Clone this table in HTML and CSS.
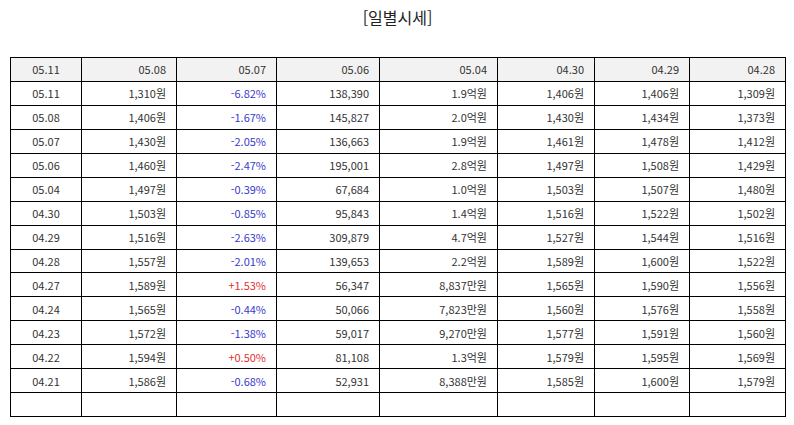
FILE: index.html
```html
<!DOCTYPE html>
<html lang="ko">
<head>
<meta charset="utf-8">
<link rel="stylesheet" href="styles.css">
</head>
<body>
<div class="page">
<h1 class="title">[일별시세]</h1>
<table class="grid">
<colgroup>
<col class="c1"><col class="c2"><col class="c3"><col class="c4"><col class="c5"><col class="c6"><col class="c7"><col class="c8">
</colgroup>
<thead>
<tr><th class="date">05.11</th><th>05.08</th><th>05.07</th><th>05.06</th><th>05.04</th><th>04.30</th><th>04.29</th><th>04.28</th></tr>
</thead>
<tbody>
<tr><td class="date">05.11</td><td>1,310원</td><td class="dn">-6.82%</td><td>138,390</td><td>1.9억원</td><td>1,406원</td><td>1,406원</td><td>1,309원</td></tr>
<tr><td class="date">05.08</td><td>1,406원</td><td class="dn">-1.67%</td><td>145,827</td><td>2.0억원</td><td>1,430원</td><td>1,434원</td><td>1,373원</td></tr>
<tr><td class="date">05.07</td><td>1,430원</td><td class="dn">-2.05%</td><td>136,663</td><td>1.9억원</td><td>1,461원</td><td>1,478원</td><td>1,412원</td></tr>
<tr><td class="date">05.06</td><td>1,460원</td><td class="dn">-2.47%</td><td>195,001</td><td>2.8억원</td><td>1,497원</td><td>1,508원</td><td>1,429원</td></tr>
<tr><td class="date">05.04</td><td>1,497원</td><td class="dn">-0.39%</td><td>67,684</td><td>1.0억원</td><td>1,503원</td><td>1,507원</td><td>1,480원</td></tr>
<tr><td class="date">04.30</td><td>1,503원</td><td class="dn">-0.85%</td><td>95,843</td><td>1.4억원</td><td>1,516원</td><td>1,522원</td><td>1,502원</td></tr>
<tr><td class="date">04.29</td><td>1,516원</td><td class="dn">-2.63%</td><td>309,879</td><td>4.7억원</td><td>1,527원</td><td>1,544원</td><td>1,516원</td></tr>
<tr><td class="date">04.28</td><td>1,557원</td><td class="dn">-2.01%</td><td>139,653</td><td>2.2억원</td><td>1,589원</td><td>1,600원</td><td>1,522원</td></tr>
<tr><td class="date">04.27</td><td>1,589원</td><td class="up">+1.53%</td><td>56,347</td><td>8,837만원</td><td>1,565원</td><td>1,590원</td><td>1,556원</td></tr>
<tr><td class="date">04.24</td><td>1,565원</td><td class="dn">-0.44%</td><td>50,066</td><td>7,823만원</td><td>1,560원</td><td>1,576원</td><td>1,558원</td></tr>
<tr><td class="date">04.23</td><td>1,572원</td><td class="dn">-1.38%</td><td>59,017</td><td>9,270만원</td><td>1,577원</td><td>1,591원</td><td>1,560원</td></tr>
<tr><td class="date">04.22</td><td>1,594원</td><td class="up">+0.50%</td><td>81,108</td><td>1.3억원</td><td>1,579원</td><td>1,595원</td><td>1,569원</td></tr>
<tr><td class="date">04.21</td><td>1,586원</td><td class="dn">-0.68%</td><td>52,931</td><td>8,388만원</td><td>1,585원</td><td>1,600원</td><td>1,579원</td></tr>
<tr><td class="date"></td><td></td><td></td><td></td><td></td><td></td><td></td><td></td></tr>
</tbody>
</table>
</div>
</body>
</html>
```
FILE: styles.css
```css
html, body {
  margin: 0;
  padding: 0;
  background: #ffffff;
}
.page {
  padding: 0 9px 0 10px;
  font-family: "Noto Sans CJK KR", "Noto Sans", sans-serif;
  color: #333333;
}
.title {
  margin: 0;
  height: 57px;
  padding-top: 6px;
  box-sizing: border-box;
  text-align: center;
  font-size: 16px;
  font-weight: normal;
  line-height: 22px;
  color: #222222;
}
.grid {
  width: 775px;
  border-collapse: collapse;
  table-layout: fixed;
  font-size: 11px;
}
.c1 { width: 71px; }
.c2 { width: 95px; }
.c3 { width: 100px; }
.c4 { width: 103px; }
.c5 { width: 118px; }
.c6 { width: 97px; }
.c7 { width: 95px; }
.c8 { width: 96px; }
.grid th,
.grid td {
  border: 1px solid #000000;
  height: 22.95px;
  padding: 0 10px 0 0;
  text-align: right;
  font-weight: normal;
  line-height: 14px;
  white-space: nowrap;
}
.grid th {
  background: #f2f2f2;
}
.grid .date {
  text-align: center;
  padding: 0;
}
.grid .dn { color: #3a3acc; }
.grid .up { color: #e03030; }
```
